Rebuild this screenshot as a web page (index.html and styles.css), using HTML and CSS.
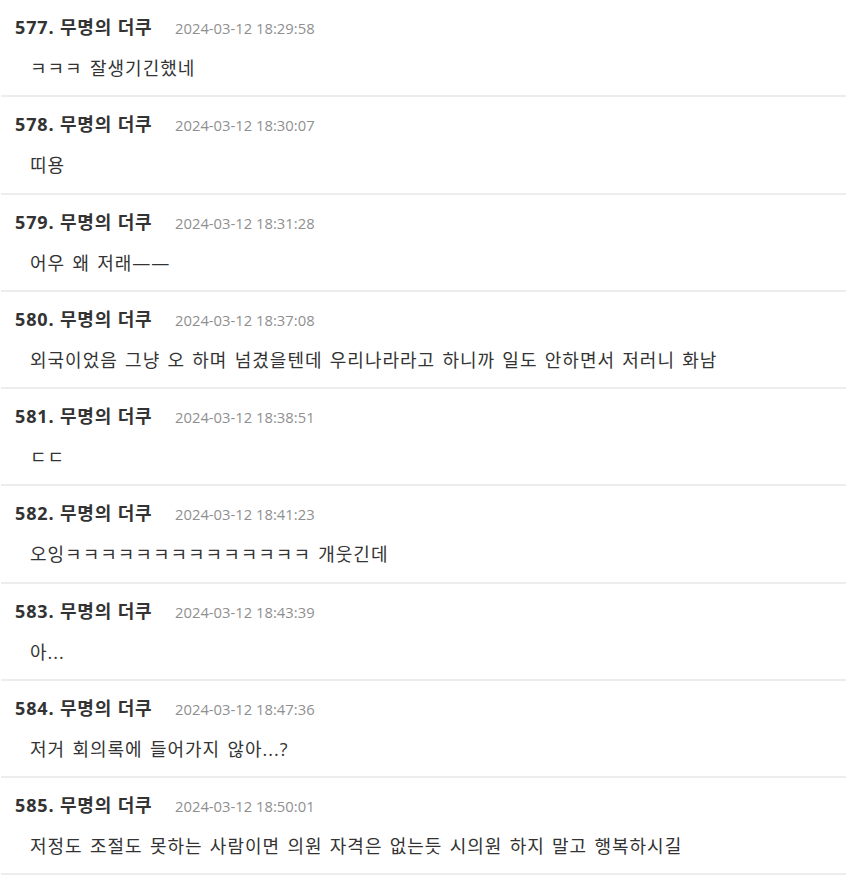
FILE: index.html
```html
<!DOCTYPE html>
<html lang="ko">
<head>
  <meta charset="UTF-8" />
  <meta name="viewport" content="width=device-width, initial-scale=1.0"/>
  <title>댓글</title>
  <link rel="stylesheet" href="styles.css">
</head>
<body>
  <ul class="replies">
    <li class="reply">
      <div class="reply-head"><span class="reply-name">577. 무명의 더쿠</span><span class="reply-date">2024-03-12 18:29:58</span></div>
      <div class="reply-body">ㅋㅋㅋ 잘생기긴했네</div>
    </li>
    <li class="reply">
      <div class="reply-head"><span class="reply-name">578. 무명의 더쿠</span><span class="reply-date">2024-03-12 18:30:07</span></div>
      <div class="reply-body">띠용</div>
    </li>
    <li class="reply">
      <div class="reply-head"><span class="reply-name">579. 무명의 더쿠</span><span class="reply-date">2024-03-12 18:31:28</span></div>
      <div class="reply-body">어우 왜 저래——</div>
    </li>
    <li class="reply">
      <div class="reply-head"><span class="reply-name">580. 무명의 더쿠</span><span class="reply-date">2024-03-12 18:37:08</span></div>
      <div class="reply-body">외국이었음 그냥 오 하며 넘겼을텐데 우리나라라고 하니까 일도 안하면서 저러니 화남</div>
    </li>
    <li class="reply">
      <div class="reply-head"><span class="reply-name">581. 무명의 더쿠</span><span class="reply-date">2024-03-12 18:38:51</span></div>
      <div class="reply-body">ㄷㄷ</div>
    </li>
    <li class="reply">
      <div class="reply-head"><span class="reply-name">582. 무명의 더쿠</span><span class="reply-date">2024-03-12 18:41:23</span></div>
      <div class="reply-body">오잉ㅋㅋㅋㅋㅋㅋㅋㅋㅋㅋㅋㅋㅋㅋ 개웃긴데</div>
    </li>
    <li class="reply">
      <div class="reply-head"><span class="reply-name">583. 무명의 더쿠</span><span class="reply-date">2024-03-12 18:43:39</span></div>
      <div class="reply-body">아...</div>
    </li>
    <li class="reply">
      <div class="reply-head"><span class="reply-name">584. 무명의 더쿠</span><span class="reply-date">2024-03-12 18:47:36</span></div>
      <div class="reply-body">저거 회의록에 들어가지 않아...?</div>
    </li>
    <li class="reply">
      <div class="reply-head"><span class="reply-name">585. 무명의 더쿠</span><span class="reply-date">2024-03-12 18:50:01</span></div>
      <div class="reply-body">저정도 조절도 못하는 사람이면 의원 자격은 없는듯 시의원 하지 말고 행복하시길</div>
    </li>
  </ul>
</body>
</html>
```

FILE: styles.css
```css
body {
  margin: 0;
  background: #fff;
  font-family: 'Open Sans', 'Noto Sans CJK KR', sans-serif;
  color: #333;
}

.replies {
  list-style: none;
  margin: 0 1px;
  padding: 0;
}

.reply {
  padding: 13px 14px 13.25px;
  border-bottom: 2px solid #ededed;
}

.reply-head {
  display: flex;
  align-items: baseline;
  height: 28px;
  line-height: 28px;
}

.reply-name {
  width: 160px;
  font-size: 18px;
  font-weight: bold;
  letter-spacing: 0.85px;
  color: #333;
}

.reply-date {
  font-size: 14.8px;
  color: #8f8f8f;
}

.reply-body {
  margin-top: 13px;
  padding-left: 15px;
  line-height: 28px;
  font-size: 18px;
  letter-spacing: 1px;
  word-spacing: 1.6px;
  color: #333;
}
```
